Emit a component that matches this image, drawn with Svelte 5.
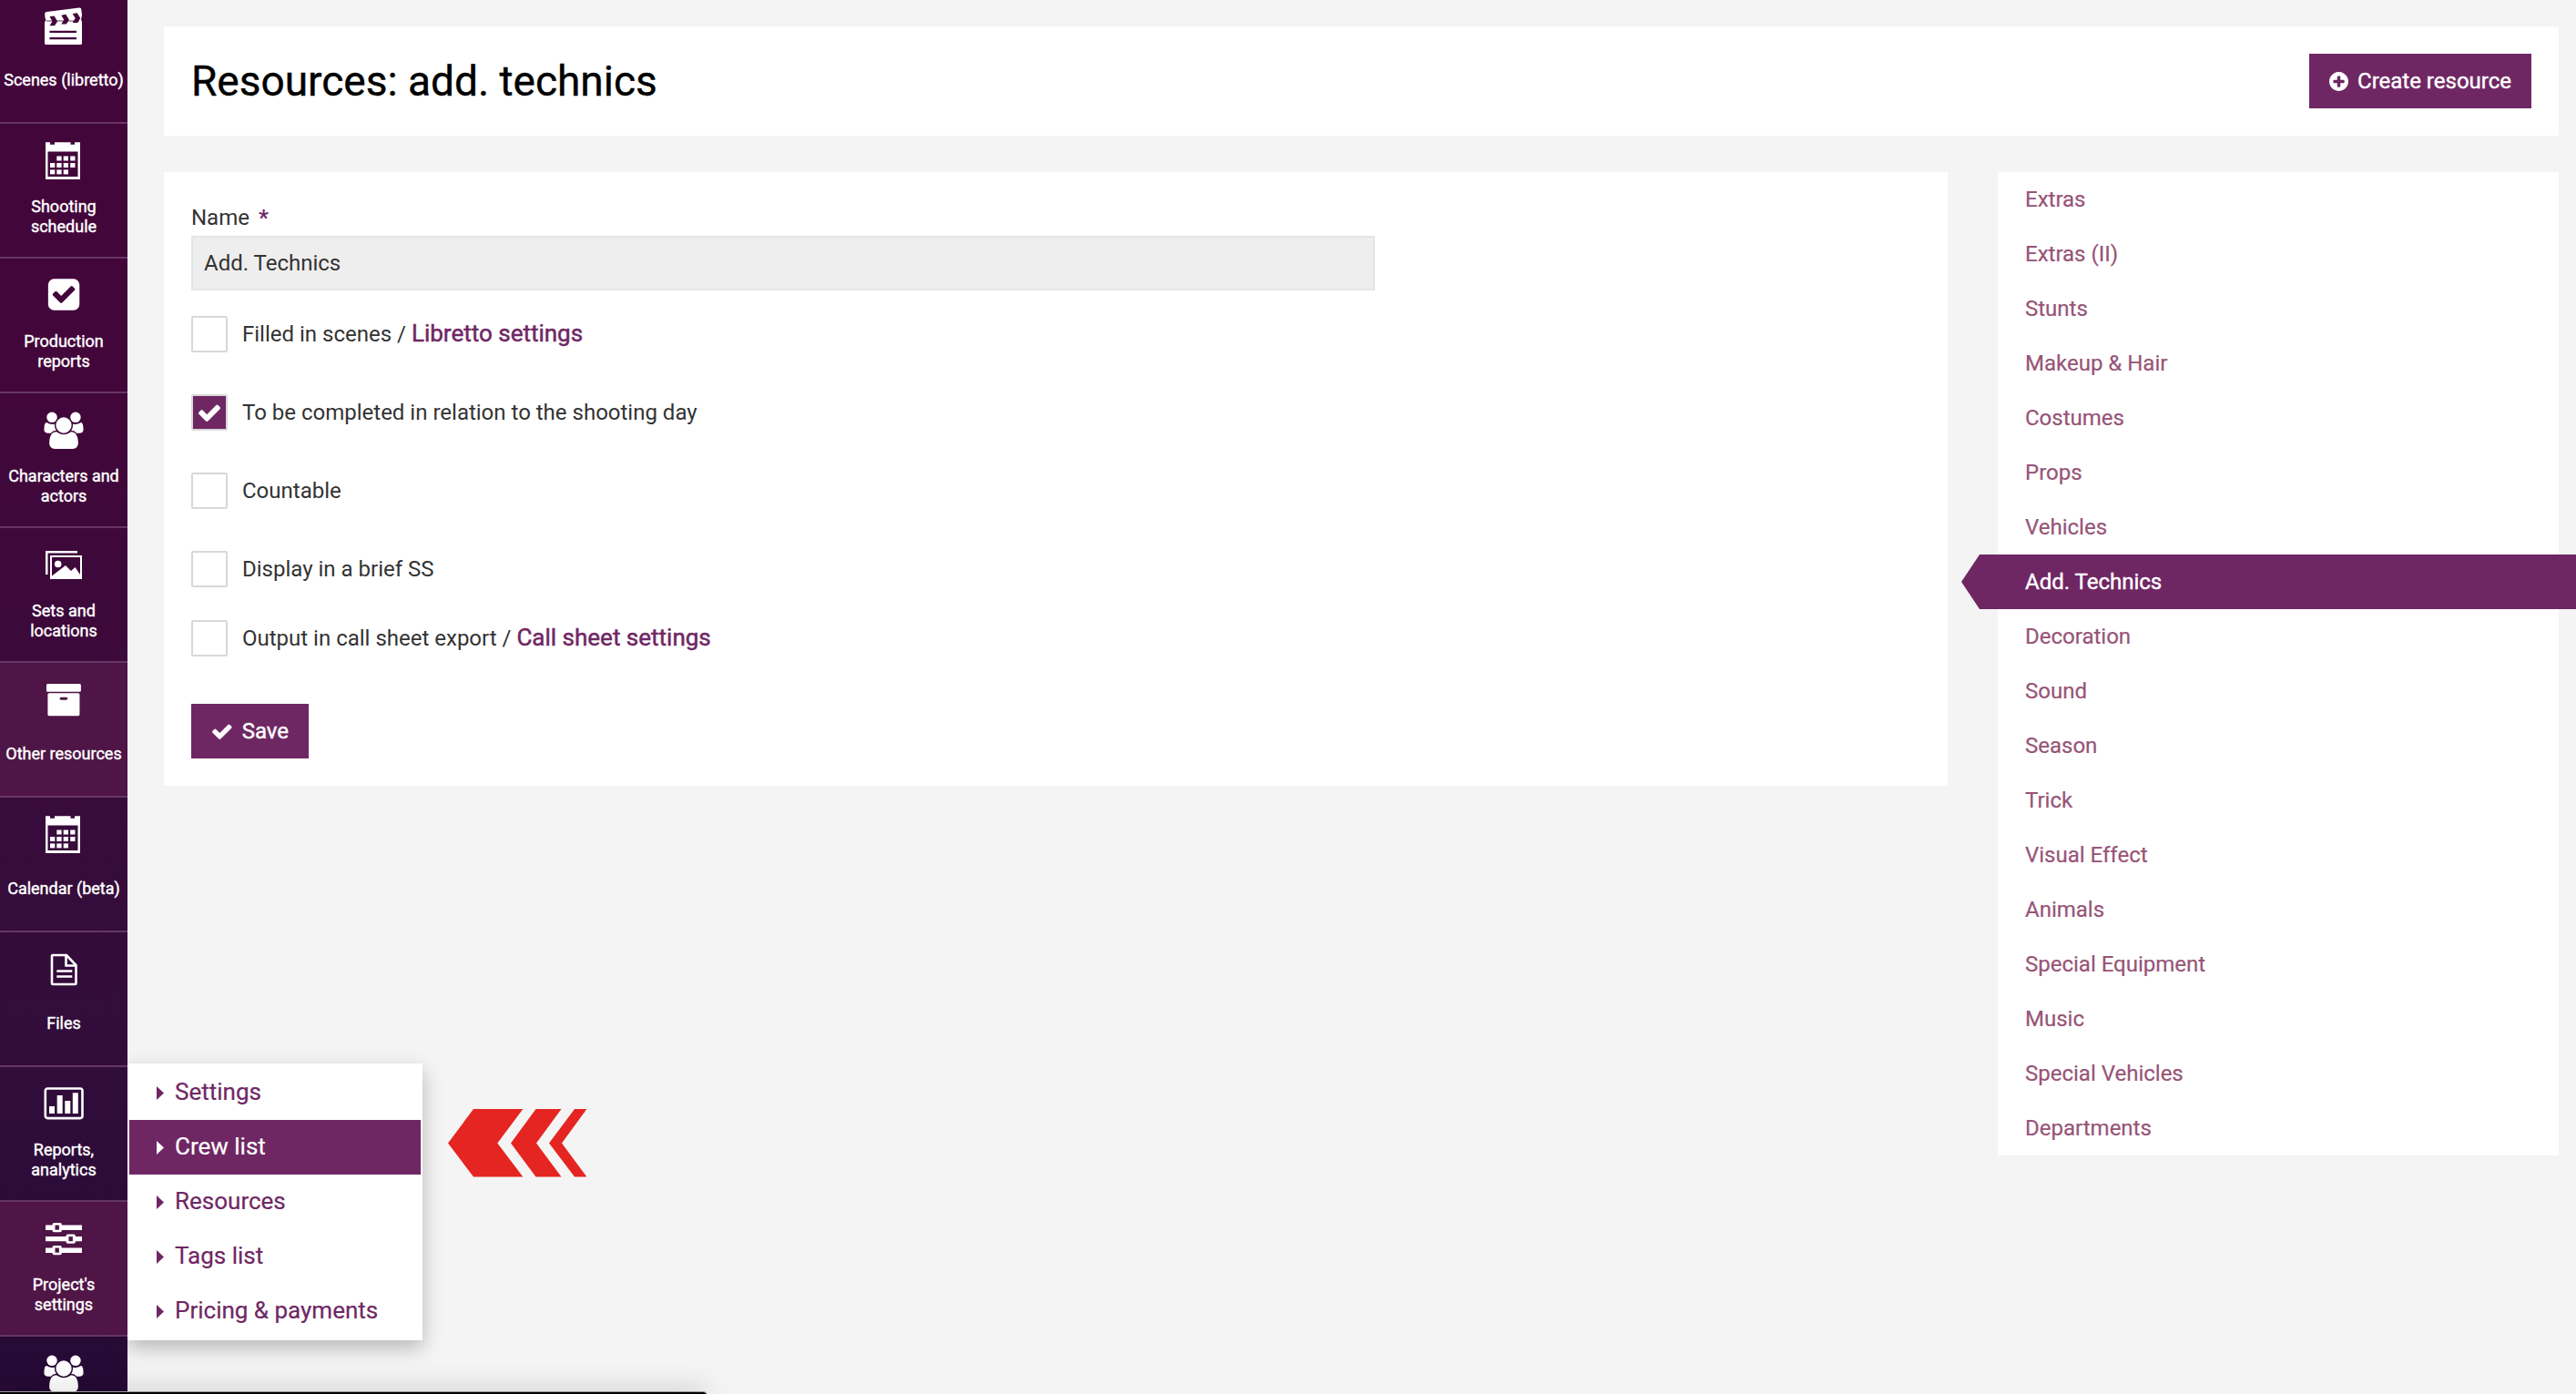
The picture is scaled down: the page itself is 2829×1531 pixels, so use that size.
<script>
    const navItems = [
        { label: 'Scenes (libretto)', icon: 'clapper' },
        { label: 'Shooting schedule', icon: 'calendar', twoLines: true },
        { label: 'Production reports', icon: 'check', twoLines: true },
        { label: 'Characters and actors', icon: 'group', twoLines: true },
        { label: 'Sets and locations', icon: 'images', twoLines: true },
        { label: 'Other resources', icon: 'archive', active: true },
        { label: 'Calendar (beta)', icon: 'calendar' },
        { label: 'Files', icon: 'file' },
        { label: 'Reports, analytics', icon: 'chart', twoLines: true },
        { label: "Project's settings", icon: 'sliders', twoLines: true, active: true },
        { label: '', icon: 'group' }
    ];

    const submenu = ['Settings', 'Crew list', 'Resources', 'Tags list', 'Pricing & payments'];
    let hovered = $state('Crew list');

    const resources = [
        'Extras', 'Extras (II)', 'Stunts', 'Makeup & Hair', 'Costumes', 'Props',
        'Vehicles', 'Add. Technics', 'Decoration', 'Sound', 'Season', 'Trick',
        'Visual Effect', 'Animals', 'Special Equipment', 'Music',
        'Special Vehicles', 'Departments'
    ];
    let current = $state('Add. Technics');

    let options = $state([
        { label: 'Filled in scenes', link: 'Libretto settings', checked: false },
        { label: 'To be completed in relation to the shooting day', checked: true },
        { label: 'Countable', checked: false },
        { label: 'Display in a brief SS', checked: false, tight: true },
        { label: 'Output in call sheet export', link: 'Call sheet settings', checked: false }
    ]);

    // calendar day squares: [x, y]
    const days = [
        [14.3, 15.5], [21.7, 15.5], [29.2, 15.5],
        [7, 23], [14.3, 23], [21.7, 23], [29.2, 23],
        [7, 30.4], [14.3, 30.4], [21.7, 30.4]
    ];

    const CHECK = 'M1671 566q0 40-28 68l-724 724-136 136q-28 28-68 28t-68-28l-136-136-362-362q-28-28-28-68t28-68l136-136q28-28 68-28t68 28l294 295 656-657q28-28 68-28t68 28l136 136q28 28 28 68z';
    const PLUS = 'M1344 960v-128q0-26-19-45t-45-19h-256v-256q0-26-19-45t-45-19h-128q-26 0-45 19t-19 45v256h-256q-26 0-45 19t-19 45v128q0 26 19 45t45 19h256v256q0 26 19 45t45 19h128q26 0 45-19t19-45v-256h256q26 0 45-19t19-45zm320-64q0 209-103 385.5t-279.5 279.5-385.5 103-385.5-103-279.5-279.5-103-385.5 103-385.5 279.5-279.5 385.5-103 385.5 103 279.5 279.5 103 385.5z';
    const CHECK_SQUARE = 'M813 1299l614-614q19-19 19-45t-19-45l-102-102q-19-19-45-19t-45 19l-467 467-211-211q-19-19-45-19t-45 19l-102 102q-19 19-19 45t19 45l358 358q19 19 45 19t45-19zm851-883v960q0 119-84.5 203.5t-203.5 84.5h-960q-119 0-203.5-84.5t-84.5-203.5v-960q0-119 84.5-203.5t203.5-84.5h960q119 0 203.5 84.5t84.5 203.5z';
    const GROUP = 'M593 896q-162 5-265 128h-134q-82 0-138-40.5t-56-118.5q0-353 124-353 6 0 43.5 21t97.5 42.5 119 21.5q67 0 133-23-5 37-5 66 0 139 81 256zm1071 637q0 120-73 189.5t-194 69.5h-874q-121 0-194-69.5t-73-189.5q0-53 3.5-103.5t14-109 26.5-108.5 43-97.5 62-81 85.5-53.5 111.5-20q10 0 43 21.5t73 48 107 48 135 21.5 135-21.5 107-48 73-48 43-21.5q61 0 111.5 20t85.5 53.5 62 81 43 97.5 26.5 108.5 14 109 3.5 103.5zm-1024-1277q0 106-75 181t-181 75-181-75-75-181 75-181 181-75 181 75 75 181zm704 384q0 159-112.5 271.5t-271.5 112.5-271.5-112.5-112.5-271.5 112.5-271.5 271.5-112.5 271.5 112.5 112.5 271.5zm576 225q0 78-56 118.5t-138 40.5h-134q-103-123-265-128 81-117 81-256 0-29-5-66 66 23 133 23 59 0 119-21.5t97.5-42.5 43.5-21q124 0 124 353zm-128-609q0 106-75 181t-181 75-181-75-75-181 75-181 181-75 181 75 75 181z';
    const ARCHIVE = 'M1088 832q0-26-19-45t-45-19h-256q-26 0-45 19t-19 45 19 45 45 19h256q26 0 45-19t19-45zm576-192v960q0 26-19 45t-45 19h-1408q-26 0-45-19t-19-45v-960q0-26 19-45t45-19h1408q26 0 45 19t19 45zm64-448v256q0 26-19 45t-45 19h-1536q-26 0-45-19t-19-45v-256q0-26 19-45t45-19h1536q26 0 45 19t19 45z';
</script>

{#snippet icon(name)}
    <svg class="nav-icon" viewBox="0 0 44 44">
        {#if name === 'clapper'}
            <path d="M1.200 8.200Q1 6 3.200 5.600L39 1q2-.3 2.300 1.800L42 9l-1 5.500L42 16v24q0 1.500-1.500 1.500h-38Q1 41.500 1 40V17l1.500-2.500L1.500 12z" transform="translate(0 -.5)" />
            {#each [0, 12.8, 25.2] as dx}
                <path class="hole" d="M6.500 10.300l5-.8 3.600 5.900-3.100 4.800H6.500l3-4.800z" transform="translate({dx} {-dx * 0.13}) " />
            {/each}
            <path class="cut" d="M3 15h36" />
            <path class="slot" d="M6.500 26.800h29.500M6.500 34.200h29.500" />
        {:else if name === 'calendar'}
            <path fill-rule="evenodd" d="M2 .3h5v2.500h5V.3h17.500v2.500h4.500V.3h6V41H2zM4.500 10.500v27.500h33V10.500z" />
            {#each days as [x, y]}
                <rect {x} {y} width="5.300" height="5" />
            {/each}
        {:else if name === 'check'}
            <path d={CHECK_SQUARE} transform="translate(2 -.6) scale(.0224)" />
        {:else if name === 'group'}
            <path d={GROUP} transform="translate(.4 .6) scale(.0225)" />
        {:else if name === 'images'}
            <path d="M2 5h35v2.500H4.500V31H2z" />
            <path fill-rule="evenodd" d="M7 10h35v26H7zM9 12v20.500L24 21l6 6 4.500-4 5.500 8V12z" />
            <circle cx="15.700" cy="19.500" r="3.800" />
        {:else if name === 'archive'}
            <path d={ARCHIVE} transform="translate(1.500 .2) scale(.0228)" />
        {:else if name === 'file'}
            <path class="line" d="M10 5h15l10.500 11v20q0 1-1 1H10q-1 0-1-1V6q0-1 1-1zM24.500 5v11.500h11M14.300 22.500h17M14.300 28.500h17" />
        {:else if name === 'chart'}
            <rect class="line" x="1.800" y="3.500" width="40.700" height="32.600" rx="2.500" />
            <path d="M6 23h6v8H6zM14.700 11h6v20h-6zM23.300 17h6v14h-6zM31.800 8.300h6V31h-6z" />
        {:else if name === 'sliders'}
            <path d="M2 5.500h40V11H2zM2 18h40v5.300H2zM2 30.500h40V36H2z" />
            {#each [[9.5, 3], [24.5, 15.5], [9.5, 28]] as [x, y]}
                <rect {x} {y} width="10.400" height="10.300" rx="2" />
                <rect class="hole lit" x={x + 3} y={y + 2.6} width="4.400" height="5.100" />
            {/each}
        {/if}
    </svg>
{/snippet}

<div class="page">
    <nav class="sidebar">
        {#each navItems as item}
            <a class="nav-item" class:active={item.active} href="#top">
                {@render icon(item.icon)}
                <span class="nav-label" class:single={!item.twoLines}>{item.label}</span>
            </a>
        {/each}
    </nav>

    <main class="content">
        <header class="card header">
            <h1>Resources: add. technics</h1>
            <button class="btn create">
                <svg class="plus" viewBox="128 128 1536 1536"><path d={PLUS} /></svg>
                Create resource
            </button>
        </header>

        <div class="columns">
            <form class="card form">
                <label class="field-label" for="name">Name <b>*</b></label>
                <input id="name" class="field" type="text" value="Add. Technics" readonly />
                {#each options as option}
                    <div class="option" class:tight={option.tight}>
                        <button
                            type="button"
                            class="checkbox"
                            class:checked={option.checked}
                            aria-label={option.label}
                            onclick={() => (option.checked = !option.checked)}
                        >
                            {#if option.checked}
                                <svg class="tick" viewBox="121 298 1550 1224"><path d={CHECK} /></svg>
                            {/if}
                        </button>
                        <span>{option.label}{#if option.link}&nbsp;/ <a href="#top">{option.link}</a>{/if}</span>
                    </div>
                {/each}
                <button class="btn save" type="button">
                    <svg class="save-tick" viewBox="121 298 1550 1224"><path d={CHECK} /></svg>
                    Save
                </button>
            </form>

            <ul class="card resources">
                {#each resources as name}
                    <li class:current={name === current}>
                        <a href="#top" onclick={() => (current = name)}>{name}</a>
                    </li>
                {/each}
            </ul>
        </div>
    </main>

    <ul class="submenu">
        {#each submenu as name}
            <li class:hovered={name === hovered} onmouseenter={() => (hovered = name)}>
                <svg class="caret" viewBox="0 0 8 15"><path d="M0 0l8 7.500L0 15z" /></svg>
                <a href="#top">{name}</a>
            </li>
        {/each}
    </ul>

    <svg class="pointer" viewBox="0 0 152 75">
        <path d="M28 0h54.300L54.300 37.500l28 37H28L0 37.500zM96.500 0h28L97 37.500l27.500 37h-28L69 37.500zM139 0h13.300L125 37.500l27.300 37H139L111 37.500z" />
    </svg>

    <div class="statusbar"></div>
</div>

<style>
:global(body) {
    margin: 0;
    background: #f4f4f4;
}

.page {
    position: relative;
    display: flex;
    height: 1531px;
    overflow: hidden;
    background: #f4f4f4;
    color: #333;
    font-family: Roboto, "Liberation Sans", sans-serif;
    font-size: 24px;
}

a {
    color: inherit;
    text-decoration: none;
}

ul {
    list-style: none;
    margin: 0;
    padding: 0;
}

/* sidebar */
.sidebar {
    flex: none;
    width: 140px;
    height: 1543px;
    margin-top: -12px;
    background: linear-gradient(#43063b 0%, #42063a 28%, #390b3b 55%, #320d3b 75%, #250a36 100%);
}

.nav-item {
    display: flex;
    flex-direction: column;
    align-items: center;
    box-sizing: border-box;
    height: 148px;
    padding-top: 20px;
    border-bottom: 2px solid #653662;
    color: #fff;
    text-align: center;
}

.nav-item.active {
    background: #4f1546;
}

.nav-icon {
    width: 44px;
    height: 44px;
    fill: #fff;
}

.nav-icon .hole {
    fill: #43063b;
}

.nav-icon .lit {
    fill: #4f1546;
}

.nav-icon .cut {
    stroke: #43063b;
    stroke-width: .8;
}

.nav-icon .slot {
    stroke: #43063b;
    stroke-width: 2.2;
}

.nav-icon .line {
    fill: none;
    stroke: #fff;
    stroke-width: 2.6;
}

.nav-label {
    display: flex;
    flex-direction: column;
    justify-content: center;
    height: 44px;
    width: 136px;
    margin-top: 16px;
    font-size: 18px;
    line-height: 22px;
    -webkit-text-stroke: .4px #fff;
}

.nav-label.single {
    height: 40px;
    white-space: nowrap;
}

/* content */
.content {
    flex: 1;
    padding: 29px 19px 0 40px;
}

.card {
    background: #fff;
}

.header {
    display: flex;
    align-items: center;
    justify-content: space-between;
    height: 120px;
    padding: 0 30px;
    margin-bottom: 40px;
    box-sizing: border-box;
}

h1 {
    margin: 0;
    color: #000;
    font-size: 46px;
    font-weight: 400;
    -webkit-text-stroke: .4px #000;
}

.btn {
    display: flex;
    align-items: center;
    height: 60px;
    padding: 0 22px;
    border: 0;
    background: #6f2764;
    color: #fff;
    font: 400 24px Roboto, sans-serif;
    -webkit-text-stroke: .4px #fff;
    white-space: nowrap;
}

.btn svg {
    fill: #fff;
}

.plus {
    width: 21px;
    height: 21px;
    margin-right: 10px;
}

.columns {
    display: flex;
    align-items: flex-start;
    justify-content: space-between;
}

.form {
    box-sizing: border-box;
    width: 1959px;
    height: 674px;
    padding: 36px 30px 0;
}

.field-label {
    display: block;
    height: 34px;
    line-height: 28px;
}

.field-label b {
    margin-left: 4px;
    color: #6f2764;
}

.field {
    display: block;
    box-sizing: border-box;
    width: 1300px;
    height: 60px;
    margin-bottom: 28px;
    padding: 0 12px;
    border: 2px solid #e4e4ea;
    background: #eee;
    color: #333;
    font: inherit;
}

.option {
    display: flex;
    align-items: center;
    height: 40px;
    margin-bottom: 46px;
    line-height: 28px;
}

.option.tight {
    margin-bottom: 36px;
}

.option a {
    color: #6f2764;
    font-size: 26px;
    line-height: 20px;
    -webkit-text-stroke: .5px #6f2764;
}

.checkbox {
    display: flex;
    align-items: center;
    justify-content: center;
    box-sizing: border-box;
    width: 40px;
    height: 40px;
    margin-right: 16px;
    padding: 0;
    border: 2px solid #d8d8d8;
    border-radius: 2px;
    background: #fff;
}

.checkbox.checked {
    background: #6f2764;
}

.tick {
    width: 24px;
    height: 19px;
    fill: #fff;
}

.save {
    width: 129px;
    margin-top: 52px;
    padding-left: 23px;
}

.save-tick {
    width: 22px;
    height: 17px;
    margin-right: 11px;
}

/* resource list */
.resources {
    width: 616px;
}

.resources li {
    height: 60px;
    padding-left: 30px;
    color: #975477;
    line-height: 60px;
    -webkit-text-stroke: .2px currentColor;
}

.resources .current {
    margin: 0 -19px 0 -40px;
    padding-left: 70px;
    background: #6f2764;
    color: #fff;
    -webkit-text-stroke: .4px #fff;
    clip-path: polygon(0 50%, 20px 0, 100% 0, 100% 100%, 20px 100%);
}

/* flyout over the page */
.submenu {
    position: absolute;
    left: 140px;
    top: 1168px;
    box-sizing: border-box;
    width: 324px;
    padding: 2px;
    background: #fff;
    color: #6f2764;
    font-size: 26px;
    box-shadow: 0 8px 20px rgba(0, 0, 0, .25);
    clip-path: inset(-40px -40px -40px 0);
}

.submenu li {
    display: flex;
    align-items: center;
    gap: 12px;
    height: 60px;
    padding-left: 30px;
    -webkit-text-stroke: .2px currentColor;
}

.submenu a {
    padding-bottom: 3px;
}

.submenu .hovered {
    background: #6f2764;
    color: #fff;
}

.caret {
    width: 8px;
    height: 15px;
    fill: currentColor;
}

.pointer {
    position: absolute;
    left: 492px;
    top: 1218px;
    width: 152px;
    height: 75px;
    fill: #e52521;
}

.statusbar {
    position: absolute;
    left: 0;
    bottom: -6px;
    width: 776px;
    height: 8px;
    border-radius: 0 4px 0 0;
    background: #000;
    box-shadow: 0 0 0 1px #999, 0 0 30px rgba(0, 0, 0, .35);
}
</style>
